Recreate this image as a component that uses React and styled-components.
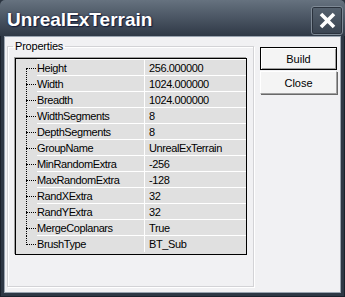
import styled, { createGlobalStyle } from 'styled-components';

const rows = [
  ['Height', '256.000000'],
  ['Width', '1024.000000'],
  ['Breadth', '1024.000000'],
  ['WidthSegments', '8'],
  ['DepthSegments', '8'],
  ['GroupName', 'UnrealExTerrain'],
  ['MinRandomExtra', '-256'],
  ['MaxRandomExtra', '-128'],
  ['RandXExtra', '32'],
  ['RandYExtra', '32'],
  ['MergeCoplanars', 'True'],
  ['BrushType', 'BT_Sub'],
];

export default function App() {
  return (
    <>
      <GlobalStyle />
      <Window>
        <TitleBar>
          <Title>UnrealExTerrain</Title>
          <CloseBox aria-label="Close">
            <svg width="17" height="17" viewBox="0 0 17 17">
              <path d="M2 2 L15 15 M15 2 L2 15" stroke="#fff" strokeWidth="3.6" fill="none" />
            </svg>
          </CloseBox>
        </TitleBar>
        <Frame>
          <Client>
            <GroupBox>
              <Legend>Properties</Legend>
              <Grid>
                {rows.map(([name, value], i) => (
                  <Row key={name}>
                    <TreeCell $first={i === 0} $last={i === rows.length - 1} />
                    <NameCell>{name}</NameCell>
                    <ValueCell>{value}</ValueCell>
                  </Row>
                ))}
              </Grid>
            </GroupBox>
            <Buttons>
              <Button $default>Build</Button>
              <Button>Close</Button>
            </Buttons>
          </Client>
        </Frame>
      </Window>
    </>
  );
}

const GlobalStyle = createGlobalStyle`
  body {
    margin: 0;
    background: #2b3440;
    font-family: "Liberation Sans", Arial, sans-serif;
  }
`;

const Window = styled.div`
  width: 345px;
  height: 297px;
  display: flex;
  flex-direction: column;
  background: #2e3845;
  border-radius: 5px 5px 0 0;
  box-shadow: inset 0 0 0 1px #1b222c;
  overflow: hidden;
`;

const TitleBar = styled.div`
  height: 36px;
  box-sizing: border-box;
  padding: 4px 2px 0 7px;
  display: flex;
  align-items: center;
  justify-content: space-between;
  background: linear-gradient(#66727f, #4a5563 50%, #2f3946);
`;

const Title = styled.span`
  font-size: 19px;
  font-weight: bold;
  color: #fff;
  text-shadow: 1px 1px 1px #141c3a, 0 0 2px #1c2440;
`;

const CloseBox = styled.div`
  width: 32px;
  height: 29px;
  box-sizing: border-box;
  display: flex;
  align-items: center;
  justify-content: center;
  border: 1px solid #7e8995;
  border-radius: 3px;
  background: linear-gradient(#56626f, #3a4451);
  box-shadow: inset 0 0 0 1px #2a323d;
`;

const Frame = styled.div`
  flex: 1;
  padding: 0 4px 4px;
  display: flex;
`;

const Client = styled.div`
  flex: 1;
  display: flex;
  gap: 6px;
  padding: 3px 3px 0 2px;
  background: #f1f1f3;
  border: 1px solid #9aa4b0;
`;

const GroupBox = styled.fieldset`
  box-sizing: border-box;
  width: 247px;
  height: 247px;
  margin: 0;
  padding: 5px 6px 0 7px;
  border: 1px solid #d3d3d6;
  box-shadow: 1px 1px 0 #fff, inset 1px 1px 0 #fff;
`;

const Legend = styled.legend`
  margin-left: -2px;
  padding: 0 2px;
  font-size: 11px;
  line-height: 13px;
  color: #000;
  letter-spacing: -0.2px;
`;

const Grid = styled.div`
  width: 232px;
  box-sizing: border-box;
  border: 1px solid #000;
  box-shadow: -1px -1px 0 #a0a0a0;
  background: #e0e0e0;
  padding-bottom: 3px;
`;

const Row = styled.div`
  display: grid;
  grid-template-columns: 21px 107px 1fr;
  height: 16px;
  font-size: 11px;
  letter-spacing: -0.4px;
  color: #000;
`;

const TreeCell = styled.div`
  position: relative;

  &::before {
    content: '';
    position: absolute;
    left: 10px;
    top: ${({ $first }) => ($first ? '9px' : '0')};
    bottom: ${({ $last }) => ($last ? '7px' : '0')};
    border-left: 1px dotted #000;
  }

  &::after {
    content: '';
    position: absolute;
    left: 10px;
    width: 10px;
    top: 9px;
    border-top: 1px dotted #000;
  }
`;

const NameCell = styled.div`
  border-top: 1px solid #fff;
  line-height: 15px;
  padding-top: 1px;
  white-space: nowrap;
`;

const ValueCell = styled.div`
  border-top: 1px solid #fff;
  border-left: 1px solid #fff;
  padding: 1px 0 0 4px;
  line-height: 15px;
  white-space: nowrap;
`;

const Buttons = styled.div`
  display: flex;
  flex-direction: column;
  gap: 1px;
  padding-top: 7px;
`;

const Button = styled.div`
  width: 77px;
  height: 23px;
  box-sizing: border-box;
  display: flex;
  align-items: center;
  justify-content: center;
  font-size: 11px;
  color: #000;
  background: #f4f4f4;
  border: 1px solid;
  border-color: ${({ $default }) => ($default ? '#000' : '#fff #a0a0a0 #a0a0a0 #fff')};
  box-shadow: ${({ $default }) =>
    $default ? 'inset 1px 1px 0 #fff, inset -1px -1px 0 #a0a0a0' : '1px 1px 0 #696969'};
`;
